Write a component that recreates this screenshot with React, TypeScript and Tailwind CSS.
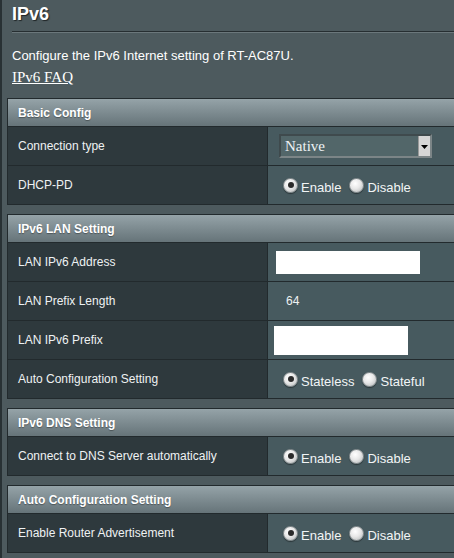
import React from 'react';

const Radio: React.FC<{ checked?: boolean; label: string }> = ({ checked, label }) => (
  <span className="inline-flex items-end mr-[8px]">
    <span className="w-[15px] h-[15px] rounded-full border border-[#8a9193] bg-[radial-gradient(circle_at_40%_35%,#ffffff_0%,#e8e8e8_45%,#b0b4b5_100%)] shadow-[0_1px_1px_rgba(0,0,0,0.4)] flex items-center justify-center">
      {checked && <span className="w-[6px] h-[6px] rounded-full bg-[#2a2a2a]" />}
    </span>
    <span className="ml-[3px] text-[13px] leading-[13px] mb-[-1px] text-[#f2f5f6]">{label}</span>
  </span>
);

const TextBox: React.FC<{ w: string; h: string; ml: string }> = ({ w, h, ml }) => (
  <div className={`bg-white ${w} ${h} ${ml}`} />
);

type Row = { label: string; value: React.ReactNode };

const Section: React.FC<{ title: string; rows: Row[] }> = ({ title, rows }) => (
  <div className="ml-[5px] w-[470px] border border-[#222a2d] mb-[9px]">
    <div className="h-[28px] border-b border-[#222a2d] bg-gradient-to-b from-[#95a3a8] to-[#667479] flex items-center pl-[10px]">
      <span className="text-[12px] font-bold text-white [text-shadow:0_1px_1px_rgba(0,0,0,0.35)]">{title}</span>
    </div>
    {rows.map((r, i) => (
      <div key={i} className={`flex ${i < rows.length - 1 ? 'h-[39px] border-b border-[#222a2d]' : 'h-[38px]'}`}>
        <div className="w-[260px] bg-[#2e393d] border-r border-[#222a2d] flex items-center pl-[10px] text-[12px] text-[#eef2f3]">
          {r.label}
        </div>
        <div className="flex-1 bg-[#475a5f] flex items-center">{r.value}</div>
      </div>
    ))}
  </div>
);

const Select: React.FC = () => (
  <div className="ml-[11px] w-[153px] h-[24px] border-2 border-t-[#3f4a4d] border-l-[#3f4a4d] border-b-[#7c8587] border-r-[#7c8587] bg-[#526669] flex items-stretch">
    <span className="flex-1 pl-[4px] flex items-center font-['Liberation_Serif','Times_New_Roman',serif] text-[15px] text-[#eef3f4]">
      Native
    </span>
    <span className="w-[12px] bg-[#d6d6d6] border-l border-[#9a9a9a] flex items-center justify-center">
      <svg width="7" height="7" viewBox="0 0 7 7">
        <path d="M0 2h7L3.5 6z" fill="#000" />
      </svg>
    </span>
  </div>
);

const Radios: React.FC<{ a: string; b: string }> = ({ a, b }) => (
  <div className="ml-[15px] flex items-center">
    <Radio checked label={a} />
    <Radio label={b} />
  </div>
);

export default function App() {
  return (
    <div className="w-[454px] h-[558px] overflow-hidden bg-[#4d5a5e] border-l-2 border-[#283134] font-['Liberation_Sans',Arial,sans-serif]">
      <div className="pl-[10px] pt-[3px]">
        <h1 className="text-[18px] leading-[22px] font-bold text-white [text-shadow:1px_1px_1px_rgba(0,0,0,0.6)]">IPv6</h1>
        <div className="mt-[6px] border-t border-[#262e31] border-b border-b-[#6b777b] h-0" />
        <p className="mt-[15px] text-[13px] leading-[16px] text-white">
          Configure the IPv6 Internet setting of RT-AC87U.
        </p>
        <a className="block mt-[4px] text-[15px] leading-[18px] underline text-white font-['Liberation_Serif','Times_New_Roman',serif]">
          IPv6 FAQ
        </a>
      </div>
      <div className="mt-[12px]">
        <Section
          title="Basic Config"
          rows={[
            { label: 'Connection type', value: <Select /> },
            { label: 'DHCP-PD', value: <Radios a="Enable" b="Disable" /> },
          ]}
        />
        <Section
          title="IPv6 LAN Setting"
          rows={[
            { label: 'LAN IPv6 Address', value: <TextBox w="w-[144px]" h="h-[23px]" ml="ml-[8px]" /> },
            { label: 'LAN Prefix Length', value: <span className="ml-[18px] text-[12px] text-[#eef2f3]">64</span> },
            { label: 'LAN IPv6 Prefix', value: <TextBox w="w-[134px]" h="h-[29px]" ml="ml-[6px]" /> },
            { label: 'Auto Configuration Setting', value: <Radios a="Stateless" b="Stateful" /> },
          ]}
        />
        <Section
          title="IPv6 DNS Setting"
          rows={[{ label: 'Connect to DNS Server automatically', value: <Radios a="Enable" b="Disable" /> }]}
        />
        <Section
          title="Auto Configuration Setting"
          rows={[{ label: 'Enable Router Advertisement', value: <Radios a="Enable" b="Disable" /> }]}
        />
      </div>
    </div>
  );
}
